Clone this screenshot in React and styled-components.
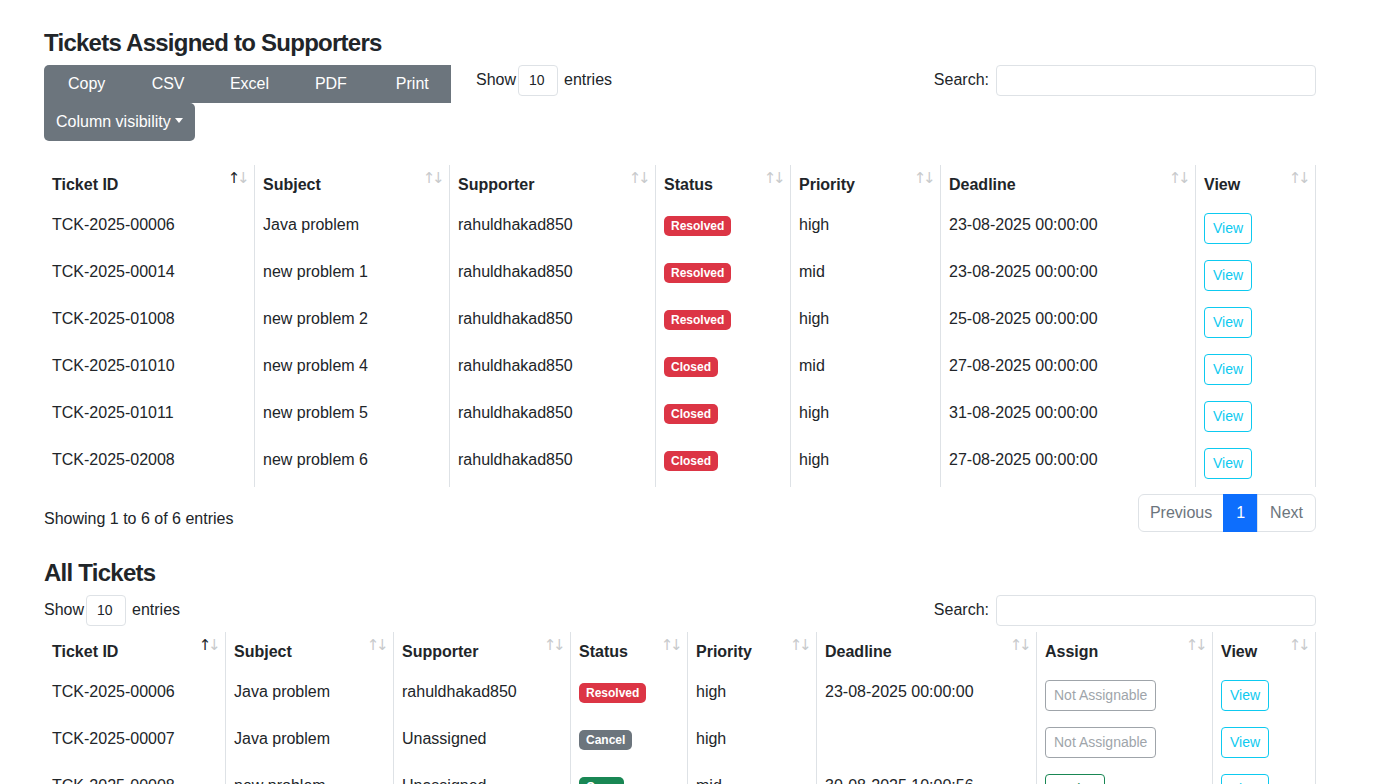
import React from "react";
import styled, { createGlobalStyle, css } from "styled-components";

const GlobalStyle = createGlobalStyle`
    *, *::before, *::after { box-sizing: border-box; }
    body {
        margin: 0;
        background: #fff;
        color: #212529;
        font-family: "Liberation Sans", Arial, sans-serif;
        font-size: 16px;
        line-height: 1.5;
    }
`;

const Page = styled.div`
    width: 1272px;
    margin-left: 44px;
    padding-top: 29px;
`;

const Section = styled.section`
    margin-bottom: 27px;
`;

const Title = styled.h4`
    margin: 0 0 7px;
    font-size: 24px;
    font-weight: 700;
    line-height: 1.2;
    letter-spacing: -0.75px;
`;

const TopBar = styled.div`
    display: flex;
    justify-content: space-between;
    align-items: flex-start;
`;

const LeftTools = styled.div`
    display: flex;
    align-items: flex-start;
`;

const ButtonGroup = styled.div`
    display: grid;
    grid-template-columns: repeat(5, 1fr);
    width: 407px;
`;

const ExportButton = styled.button`
    height: 38px;
    border: 0;
    background: #6c757d;
    color: #fff;
    font: inherit;
    padding: 6px 0 6px 4px;
    cursor: pointer;
    &:first-child { border-top-left-radius: 5px; }
`;

const DropButton = styled.button`
    height: 38px;
    border: 0;
    background: #6c757d;
    color: #fff;
    font: inherit;
    padding: 6px 12px;
    border-radius: 0 5px 5px 5px;
    cursor: pointer;
    &::after {
        content: "";
        display: inline-block;
        margin-left: 4px;
        vertical-align: 4px;
        border-top: 5px solid #fff;
        border-left: 4px solid transparent;
        border-right: 4px solid transparent;
    }
`;

const Length = styled.label`
    display: flex;
    align-items: center;
    gap: 2px;
    height: 31px;
    margin-left: ${p => p.$offset || 0}px;
`;

const SelectBox = styled.select`
    appearance: none;
    width: 40px;
    height: 31px;
    margin-right: 4px;
    padding: 0 0 0 10px;
    border: 1px solid #dee2e6;
    border-radius: 4px;
    background: #fff;
    color: #212529;
    font-family: inherit;
    font-size: 14px;
`;

const Search = styled.label`
    display: flex;
    align-items: center;
    gap: 7px;
`;

const SearchInput = styled.input`
    width: 320px;
    height: 31px;
    border: 1px solid #dee2e6;
    border-radius: 4px;
    padding: 4px 8px;
    font: inherit;
    font-size: 14px;
`;

const Table = styled.table`
    width: 1272px;
    table-layout: fixed;
    border-collapse: separate;
    border-spacing: 0;
    margin-top: ${p => p.$gap}px;
`;

const cellBase = css`
    border-right: 1px solid #dee2e6;
    padding: 8px;
    text-align: left;
    vertical-align: top;
    white-space: nowrap;
`;

const Th = styled.th`
    ${cellBase}
    position: relative;
    font-weight: 700;
    padding-right: 26px;
`;

const Td = styled.td`
    ${cellBase}
    height: 47px;
`;

const SortIcon = styled.span`
    position: absolute;
    top: 6px;
    right: 8px;
    font-family: "DejaVu Sans", sans-serif;
    font-size: 15px;
    font-weight: 400;
    line-height: 1;
    letter-spacing: -3.5px;
    color: #c8cacc;
    & b {
        font-weight: 400;
        color: ${p => p.$active ? "#212529" : "#c8cacc"};
    }
`;

const badgeColors = {
    Resolved: "#dc3545",
    Closed: "#dc3545",
    Cancel: "#6c757d",
    Open: "#198754",
};

const Badge = styled.span`
    display: inline-block;
    padding: 4px 7px;
    border-radius: 5px;
    background: ${p => badgeColors[p.$status]};
    color: #fff;
    font-size: 12px;
    font-weight: 700;
    line-height: 1;
    vertical-align: 0;
`;

const OutlineButton = styled.button`
    height: 31px;
    padding: 4px 8px;
    border: 1px solid ${p => p.$color};
    border-radius: 4px;
    background: #fff;
    color: ${p => p.$color};
    font-family: inherit;
    font-size: 14px;
    line-height: 1.5;
    opacity: ${p => p.disabled ? 0.65 : 1};
    cursor: pointer;
`;

const Footer = styled.div`
    display: flex;
    justify-content: space-between;
    align-items: flex-start;
    margin-top: 7px;
`;

const Info = styled.div`
    padding-top: 13px;
`;

const Pager = styled.ul`
    display: flex;
    margin: 0;
    padding: 0;
    list-style: none;
`;

const PageLink = styled.li`
    height: 38px;
    padding: 6px 12px;
    border: 1px solid ${p => p.$active ? "#0d6efd" : "#dee2e6"};
    margin-left: -1px;
    background: ${p => p.$active ? "#0d6efd" : "#fff"};
    color: ${p => p.$active ? "#fff" : "#6c757d"};
    &:first-child { border-radius: 6px 0 0 6px; margin-left: 0; padding: 6px 11px; }
    &:last-child { border-radius: 0 6px 6px 0; }
`;

const assigned = [
    ["TCK-2025-00006", "Java problem", "rahuldhakad850", "Resolved", "high", "23-08-2025 00:00:00"],
    ["TCK-2025-00014", "new problem 1", "rahuldhakad850", "Resolved", "mid", "23-08-2025 00:00:00"],
    ["TCK-2025-01008", "new problem 2", "rahuldhakad850", "Resolved", "high", "25-08-2025 00:00:00"],
    ["TCK-2025-01010", "new problem 4", "rahuldhakad850", "Closed", "mid", "27-08-2025 00:00:00"],
    ["TCK-2025-01011", "new problem 5", "rahuldhakad850", "Closed", "high", "31-08-2025 00:00:00"],
    ["TCK-2025-02008", "new problem 6", "rahuldhakad850", "Closed", "high", "27-08-2025 00:00:00"],
];

const allTickets = [
    ["TCK-2025-00006", "Java problem", "rahuldhakad850", "Resolved", "high", "23-08-2025 00:00:00", false],
    ["TCK-2025-00007", "Java problem", "Unassigned", "Cancel", "high", "", false],
    ["TCK-2025-00008", "new problem", "Unassigned", "Open", "mid", "30-08-2025 10:00:56", true],
    ["TCK-2025-00009", "new problem", "Unassigned", "Open", "mid", "30-08-2025 10:00:56", true],
];

function Head({ cols, widths }) {
    return (
        <>
            <colgroup>
                {widths.map((w, i) => <col key={i} style={{ width: w }} />)}
            </colgroup>
            <thead>
                <tr>
                    {cols.map((c, i) => (
                        <Th key={c}>
                            {c}
                            <SortIcon $active={i === 0}><b>↑</b>↓</SortIcon>
                        </Th>
                    ))}
                </tr>
            </thead>
        </>
    );
}

function TopControls({ withButtons }) {
    return (
        <TopBar>
            <LeftTools>
                {withButtons && (
                    <div>
                        <ButtonGroup>
                            {["Copy", "CSV", "Excel", "PDF", "Print"].map(b => (
                                <ExportButton key={b}>{b}</ExportButton>
                            ))}
                        </ButtonGroup>
                        <DropButton>Column visibility</DropButton>
                    </div>
                )}
                <Length $offset={withButtons ? 25 : 0}>
                    Show <SelectBox defaultValue="10"><option>10</option></SelectBox> entries
                </Length>
            </LeftTools>
            <Search>
                Search: <SearchInput type="search" />
            </Search>
        </TopBar>
    );
}

export default function App() {
    return (
        <Page>
            <GlobalStyle />
            <Section>
                <Title>Tickets Assigned to Supporters</Title>
                <TopControls withButtons />
                <Table $gap={24}>
                    <Head
                        cols={["Ticket ID", "Subject", "Supporter", "Status", "Priority", "Deadline", "View"]}
                        widths={[211, 195, 206, 135, 150, 255, 120]}
                    />
                    <tbody>
                        {assigned.map(r => (
                            <tr key={r[0]}>
                                <Td>{r[0]}</Td>
                                <Td>{r[1]}</Td>
                                <Td>{r[2]}</Td>
                                <Td><Badge $status={r[3]}>{r[3]}</Badge></Td>
                                <Td>{r[4]}</Td>
                                <Td>{r[5]}</Td>
                                <Td><OutlineButton $color="#0dcaf0">View</OutlineButton></Td>
                            </tr>
                        ))}
                    </tbody>
                </Table>
                <Footer>
                    <Info>Showing 1 to 6 of 6 entries</Info>
                    <Pager>
                        <PageLink>Previous</PageLink>
                        <PageLink $active>1</PageLink>
                        <PageLink>Next</PageLink>
                    </Pager>
                </Footer>
            </Section>
            <Section>
                <Title>All Tickets</Title>
                <TopControls />
                <Table $gap={6}>
                    <Head
                        cols={["Ticket ID", "Subject", "Supporter", "Status", "Priority", "Deadline", "Assign", "View"]}
                        widths={[182, 168, 177, 117, 129, 220, 176, 103]}
                    />
                    <tbody>
                        {allTickets.map(r => (
                            <tr key={r[0]}>
                                <Td>{r[0]}</Td>
                                <Td>{r[1]}</Td>
                                <Td>{r[2]}</Td>
                                <Td><Badge $status={r[3]}>{r[3]}</Badge></Td>
                                <Td>{r[4]}</Td>
                                <Td>{r[5]}</Td>
                                <Td>
                                    {r[6]
                                        ? <OutlineButton $color="#198754">Assign</OutlineButton>
                                        : <OutlineButton $color="#6c757d" disabled>Not Assignable</OutlineButton>}
                                </Td>
                                <Td><OutlineButton $color="#0dcaf0">View</OutlineButton></Td>
                            </tr>
                        ))}
                    </tbody>
                </Table>
            </Section>
        </Page>
    );
}
